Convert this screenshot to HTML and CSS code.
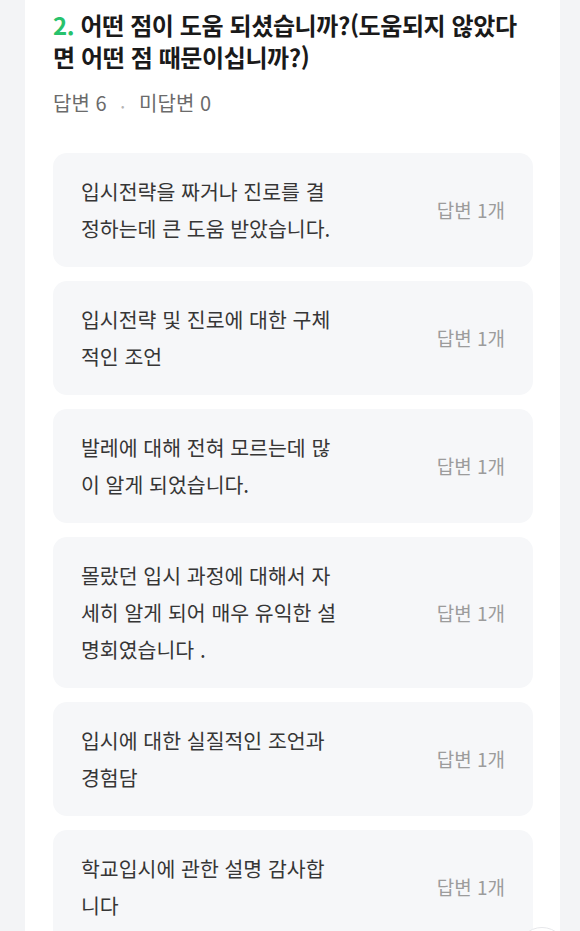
FILE: index.html
```html
<!DOCTYPE html>
<html lang="ko">
<head>
    <meta charset="UTF-8">
    <meta name="viewport" content="width=device-width, initial-scale=1.0">
    <title>설문 결과</title>
    <link rel="stylesheet" href="styles.css">
</head>
<body>

    <section class="question">
        <h2 class="question-title"><span class="num">2.</span> 어떤 점이 도움 되셨습니까?(도움되지 않았다<br>면 어떤 점 때문이십니까?)</h2>
        <p class="question-meta">답변 6 <span class="dot">•</span> 미답변 0</p>

        <ul class="answers">
            <li class="answer">
                <p class="answer-text">입시전략을 짜거나 진로를 결<br>정하는데 큰 도움 받았습니다.</p>
                <span class="answer-count">답변 1개</span>
            </li>
            <li class="answer">
                <p class="answer-text">입시전략 및 진로에 대한 구체<br>적인 조언</p>
                <span class="answer-count">답변 1개</span>
            </li>
            <li class="answer">
                <p class="answer-text">발레에 대해 전혀 모르는데 많<br>이 알게 되었습니다.</p>
                <span class="answer-count">답변 1개</span>
            </li>
            <li class="answer">
                <p class="answer-text">몰랐던 입시 과정에 대해서 자<br>세히 알게 되어 매우 유익한 설<br>명회였습니다 .</p>
                <span class="answer-count">답변 1개</span>
            </li>
            <li class="answer">
                <p class="answer-text">입시에 대한 실질적인 조언과<br>경험담</p>
                <span class="answer-count">답변 1개</span>
            </li>
            <li class="answer">
                <p class="answer-text">학교입시에 관한 설명 감사합<br>니다</p>
                <span class="answer-count">답변 1개</span>
            </li>
        </ul>
    </section>

    <!-- scroll to top button, mostly below the fold -->
    <button class="top-btn" aria-label="맨 위로"></button>

</body>
</html>
```

FILE: styles.css
```css
/* Global reset */
* {
    margin: 0;
    padding: 0;
    box-sizing: border-box;
}

body {
    font-family: "Noto Sans CJK KR", "Noto Sans", sans-serif;
    background-color: #f3f4f6;
    color: #333;
    overflow: hidden;
}

.question {
    background-color: #fff;
    margin: 0 20px 0 25px;
    padding: 9px 27px 40px 28px;
    min-height: 100vh;
}

.question-title {
    font-size: 24px;
    font-weight: 700;
    line-height: 32px;
    letter-spacing: -0.4px;
    color: #1a1a1a;
    white-space: nowrap;
}

.question-title .num {
    color: #27c26c;
}

.question-meta {
    margin-top: 16px;
    font-size: 20px;
    line-height: 28px;
    color: #6b6b6b;
}

.question-meta .dot {
    display: inline-block;
    margin: 0 9px;
    font-size: 10px;
    color: #b5b5b5;
    vertical-align: middle;
}

.answers {
    list-style: none;
    margin-top: 33px;
    display: flex;
    flex-direction: column;
    gap: 14px;
}

.answer {
    display: flex;
    justify-content: space-between;
    align-items: center;
    background-color: #f6f7f9;
    border-radius: 14px;
    padding: 20px 28px;
}

.answer-text {
    font-size: 20.5px;
    line-height: 37px;
    color: #363636;
    white-space: nowrap;
}

.answer-count {
    font-size: 19px;
    color: #9c9c9c;
}

.top-btn {
    position: fixed;
    right: 13px;
    bottom: -46px;
    width: 50px;
    height: 50px;
    border-radius: 50%;
    border: 1px solid #e6e7ea;
    background-color: #fff;
}
```
